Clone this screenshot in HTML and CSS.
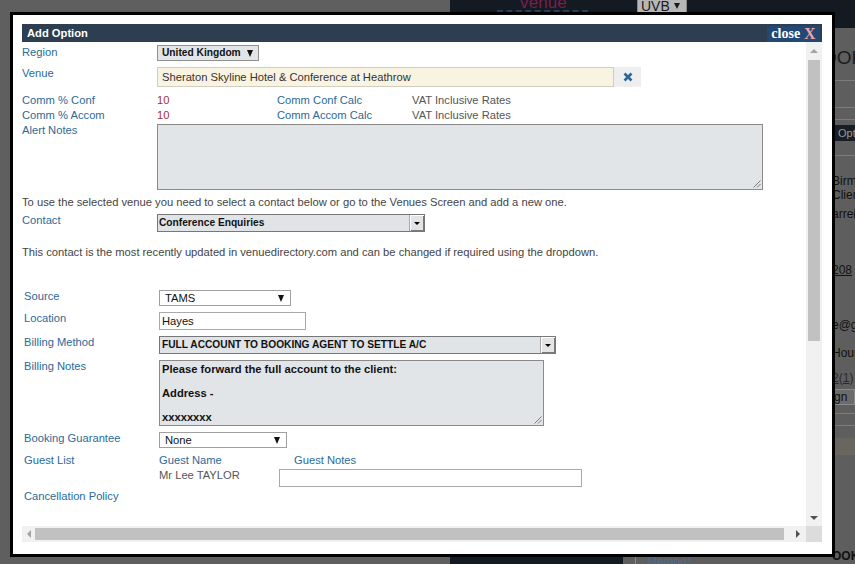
FILE: index.html
```html
<!DOCTYPE html>
<html>
<head>
<meta charset="utf-8">
<title>Add Option</title>
<link rel="stylesheet" href="styles.css">
</head>
<body>
<div class="page">
  <div class="bg-left"></div>
  <div class="bg-right">
    <div class="bg-head">
      <div class="bg-venue">Venue</div>
      <div class="bg-uvb">UVB <span class="bg-uvb-arr"></span></div>
    </div>
    <div class="bg-main">
      <div class="bg-fill">
        <div class="bg-spacer"></div>
        <div class="bg-foot">
          <div class="bg-foot-box"></div>
          <div class="bg-foot-sep"></div>
          <div class="bg-foot-text">Method*</div>
        </div>
      </div>
      <div class="bg-strip">
        <div class="s-big">OOKI</div>
        <div class="s-line s-l1"></div>
        <div class="s-line s-l2"></div>
        <div class="s-line s-l3"></div>
        <div class="s-band">Opti</div>
        <div class="s-line s-l4"></div>
        <div class="s-txt s-birmi">Birmi</div>
        <div class="s-txt">Client</div>
        <div class="s-txt s-arrei">arrei</div>
        <div class="s-txt s-208 s-u">208</div>
        <div class="s-txt s-eag">e@g</div>
        <div class="s-txt s-hour">Hour</div>
        <div class="s-txt s-21"><span class="s-u">2</span>(<span class="s-u">1</span>)</div>
        <div class="s-btn">gn</div>
        <div class="s-line s-l6"></div>
        <div class="s-line s-l7"></div>
        <div class="s-band2"></div>
        <div class="s-bottom">OOKI</div>
      </div>
    </div>
  </div>
</div>

<div class="modal">
  <div class="titlebar">
    <div class="title">Add Option</div>
    <div class="close"><span class="close-t">close</span><span class="close-x">X</span></div>
  </div>
  <div class="frame">
    <div class="content">
      <div class="row r-region">
        <div class="lbl">Region</div>
        <div class="sel sel-region"><span>United Kingdom</span><span class="tri"></span></div>
      </div>
      <div class="row r-venue">
        <div class="lbl">Venue</div>
        <div class="venue-input">Sheraton Skyline Hotel &amp; Conference at Heathrow</div>
        <div class="venue-x">
          <svg width="10" height="10" viewBox="0 0 10 10"><path d="M1.5 1.5 L8.5 8.5 M8.5 1.5 L1.5 8.5" stroke="#2a6797" stroke-width="2.6" stroke-linecap="butt"/></svg>
        </div>
      </div>
      <div class="row r-comm r-comm1">
        <div class="lbl">Comm % Conf</div>
        <div class="v10">10</div>
        <div class="calc">Comm Conf Calc</div>
        <div class="vat">VAT Inclusive Rates</div>
      </div>
      <div class="row r-comm">
        <div class="lbl">Comm % Accom</div>
        <div class="v10">10</div>
        <div class="calc">Comm Accom Calc</div>
        <div class="vat">VAT Inclusive Rates</div>
      </div>
      <div class="row r-alert">
        <div class="lbl">Alert Notes</div>
        <div class="ta ta-alert"><span class="grip"><svg width="8" height="8" viewBox="0 0 8 8"><path d="M7.5 0.5 L0.5 7.5 M7.5 4 L4 7.5" stroke="#7a7a7a" stroke-width="1"/></svg></span></div>
      </div>
      <p class="note note1">To use the selected venue you need to select a contact below or go to the Venues Screen and add a new one.</p>
      <div class="row r-contact">
        <div class="lbl">Contact</div>
        <div class="osel osel-contact"><span class="osel-t">Conference Enquiries</span><span class="obtn"><span class="otri"></span></span></div>
      </div>
      <p class="note note2">This contact is the most recently updated in venuedirectory.com and can be changed if required using the dropdown.</p>

      <div class="row2 r-source">
        <div class="lbl2">Source</div>
        <div class="wsel wsel-source"><span>TAMS</span><span class="tri"></span></div>
      </div>
      <div class="row2 r-next">
        <div class="lbl2">Location</div>
        <div class="inp inp-loc">Hayes</div>
      </div>
      <div class="row2 r-next">
        <div class="lbl2">Billing Method</div>
        <div class="osel osel-billing"><span class="osel-t">FULL ACCOUNT TO BOOKING AGENT TO SETTLE A/C</span><span class="obtn"><span class="otri"></span></span></div>
      </div>
      <div class="row2 r-next">
        <div class="lbl2">Billing Notes</div>
        <div class="ta ta-billing">
          <div class="ta-line">Please forward the full account to the client:</div>
          <div class="ta-line">&nbsp;</div>
          <div class="ta-line">Address -</div>
          <div class="ta-line">&nbsp;</div>
          <div class="ta-line">xxxxxxxx</div>
          <span class="grip"><svg width="8" height="8" viewBox="0 0 8 8"><path d="M7.5 0.5 L0.5 7.5 M7.5 4 L4 7.5" stroke="#7a7a7a" stroke-width="1"/></svg></span>
        </div>
      </div>
      <div class="row2 r-next">
        <div class="lbl2">Booking Guarantee</div>
        <div class="wsel wsel-none"><span>None</span><span class="tri"></span></div>
      </div>
      <div class="row2 r-next">
        <div class="lbl2">Guest List</div>
        <div class="ghead">Guest Name</div>
        <div class="ghead">Guest Notes</div>
      </div>
      <div class="row2 r-guest">
        <div class="lbl2"></div>
        <div class="gname">Mr Lee TAYLOR</div>
        <div class="inp inp-guest"></div>
      </div>
      <div class="row2 r-cancel">
        <div class="lbl2 lbl-wide">Cancellation Policy</div>
      </div>
    </div>
    <div class="vscroll">
      <div class="sb-btn"><span class="ar-up"></span></div>
      <div class="vthumb"></div>
      <div class="sb-fill"></div>
      <div class="sb-btn"><span class="ar-down"></span></div>
    </div>
  </div>
  <div class="hrow">
    <div class="hscroll">
      <div class="hb-left"><span class="ar-left"></span></div>
      <div class="hthumb"></div>
      <div class="sb-fill"></div>
      <div class="hb-right"><span class="ar-right"></span></div>
    </div>
    <div class="corner"></div>
  </div>
</div>
</body>
</html>
```

FILE: styles.css
```css
* { box-sizing: border-box; }
html, body { margin: 0; padding: 0; }
body {
  width: 855px;
  height: 564px;
  overflow: hidden;
  position: relative;
  background: #5f5f5f;
  font-family: "Liberation Sans", Arial, sans-serif;
}

/* ---------- background page (dimmed) ---------- */
.page { display: flex; height: 564px; }
.bg-left { width: 450px; background: #5f5f5f; }
.bg-right { flex: 1; display: flex; flex-direction: column; background: #5e5e5e; }
.bg-head {
  height: 28px;
  flex: none;
  background: #131a22;
  display: flex;
  align-items: flex-start;
  padding-left: 47px;
  overflow: hidden;
}
.bg-venue {
  width: 91px;
  height: 17px;
  margin-top: -5px;
  border-bottom: 2px dashed #2b3d5c;
  color: #7b1e4c;
  font-size: 17px;
  line-height: 15px;
  text-align: center;
}
.bg-uvb {
  margin-left: 49px;
  margin-top: -1px;
  width: 50px;
  height: 14px;
  background: #b7b7b7;
  border: 1px solid #8a8a8a;
  color: #1a1a1a;
  font-size: 14px;
  line-height: 12px;
  padding-left: 3px;
  display: flex;
  align-items: center;
  gap: 4px;
}
.bg-uvb-arr {
  width: 0; height: 0;
  border-left: 3px solid transparent;
  border-right: 3px solid transparent;
  border-top: 6px solid #1a1a1a;
}
.bg-main { flex: 1; display: flex; }
.bg-fill { width: 372px; display: flex; flex-direction: column; }
.bg-spacer { flex: 1; }
.bg-foot { height: 7px; display: flex; align-items: stretch; }
.bg-foot-box { width: 173px; background: #141a22; }
.bg-foot-sep { width: 1px; margin-left: 12px; background: #8a8a8a; }
.bg-foot-text {
  margin-left: 11px;
  color: #4b6c8d;
  font-size: 12px;
  line-height: 12px;
  margin-top: -1px;
}
.bg-strip {
  width: 33px;
  overflow: hidden;
  display: flex;
  flex-direction: column;
  color: #111;
  font-size: 12px;
}
.s-big {
  margin-top: 20px;
  font-size: 19px;
  line-height: 20px;
  color: #1c1c1c;
  white-space: nowrap;
}
.s-line { height: 1px; background: #7c7c7c; flex: none; }
.s-l1 { margin-top: 12px; }
.s-l2 { margin-top: 26px; }
.s-l3 { margin-top: 11px; }
.s-band {
  margin-top: 5px;
  height: 16px;
  background: #171e26;
  color: #999;
  font-size: 11px;
  line-height: 16px;
  padding-left: 16px;
  white-space: nowrap;
}
.s-l4 { margin-top: 14px; }
.s-txt { line-height: 14px; padding-left: 10px; white-space: nowrap; }
.s-birmi { margin-top: 18px; }
.s-arrei { margin-top: 5px; }
.s-208 { margin-top: 42px; }
.s-eag { margin-top: 41px; }
.s-hour { margin-top: 14px; }
.s-21 { margin-top: 11px; color: #2a2a2a; }
.s-u { text-decoration: underline; }
.s-btn {
  margin-top: 4px;
  height: 16px;
  margin-left: 9px;
  background: #6c6c6c;
  border: 1px solid #8a8a8a;
  line-height: 14px;
  padding-left: 2px;
  white-space: nowrap;
}
.s-l6 { margin-top: 8px; }
.s-l7 { margin-top: 11px; }
.s-band2 { margin-top: 12px; height: 17px; background: #69655f; }
.s-bottom {
  margin-top: auto;
  margin-bottom: 3px;
  font-weight: bold;
  font-size: 12px;
  line-height: 10px;
  padding-left: 10px;
  white-space: nowrap;
}

/* ---------- modal ---------- */
.modal {
  position: absolute;
  left: 10px;
  top: 12px;
  width: 825px;
  height: 545px;
  border: 3px solid #000;
  background: #fff;
  padding: 9px 10px 12px 9px;
  display: flex;
  flex-direction: column;
}
.titlebar {
  height: 18px;
  flex: none;
  background: #2c3e50;
  display: flex;
  justify-content: space-between;
  align-items: flex-start;
}
.title {
  color: #fff;
  font-weight: bold;
  font-size: 11.2px;
  line-height: 18px;
  padding-left: 5px;
}
.close {
  margin: 2px 2px 0 0;
  height: 16px;
  width: 53px;
  background: #224873;
  display: flex;
  align-items: center;
  justify-content: center;
  gap: 4px;
  font-family: "Liberation Serif", "Times New Roman", serif;
  font-weight: bold;
}
.close-t { color: #fff; font-size: 14px; line-height: 14px; }
.close-x { color: #f2a2a2; font-size: 16px; line-height: 14px; }

.frame { height: 484px; flex: none; display: flex; }
.content {
  flex: 1;
  overflow: hidden;
  padding-top: 3px;
  font-size: 11.2px;
  line-height: 14px;
  color: #333;
  white-space: nowrap;
}
.row { display: flex; align-items: flex-start; }
.lbl { width: 135px; flex: none; color: #2b6a99; }

/* selects */
.tri {
  width: 0; height: 0;
  border-left: 3.5px solid transparent;
  border-right: 3.5px solid transparent;
  border-top: 7px solid #111;
}
.sel {
  display: flex;
  align-items: center;
  gap: 6px;
  height: 16px;
  border: 1px solid #909090;
  background: #e2e5e8;
  color: #111;
  font-weight: bold;
  font-size: 10.2px;
  line-height: 14px;
  padding-left: 4px;
}
.sel-region { width: 102px; }

.r-venue { margin-top: 5px; }
.venue-input {
  margin-top: 1px;
  width: 457px;
  height: 20px;
  border: 1px solid #d1cdbf;
  background: #f9f3e1;
  padding-left: 4px;
  line-height: 18px;
  color: #333;
}
.venue-x {
  margin-top: 1px;
  width: 27px;
  height: 20px;
  background: #eeeeee;
  display: flex;
  align-items: center;
  justify-content: center;
}

.r-comm { line-height: 15px; }
.r-comm1 { margin-top: 6px; }
.v10 { width: 120px; color: #a33232; }
.calc { width: 135px; color: #2b6a99; }
.vat { color: #555; }

.ta {
  position: relative;
  border: 1px solid #8a8a8a;
  background: #e1e5e8;
}
.ta-alert { margin-top: 1px; width: 606px; height: 66px; }
.grip { position: absolute; right: 1px; bottom: 1px; width: 8px; height: 8px; display: flex; }

.note { margin: 0; color: #444; }
.note1 { margin-top: 5px; }
.note2 { margin-top: 13px; }

.r-contact { margin-top: 4px; }
.osel {
  margin-top: 1px;
  height: 18px;
  border: 1px solid #777;
  background: #e1e4e7;
  display: flex;
  justify-content: space-between;
  align-items: stretch;
  color: #111;
  font-weight: bold;
  font-size: 10.2px;
  line-height: 16px;
}
.osel-t { padding-left: 1px; }
.osel-contact { width: 268px; }
.obtn {
  width: 15px;
  background: #e4e4e4;
  border-left: 1px solid #a8a8a8;
  box-shadow: inset 1px 1px #ffffff, inset -1px -1px #7a7a7a;
  display: flex;
  align-items: center;
  justify-content: center;
}
.otri {
  width: 0; height: 0;
  border-left: 3px solid transparent;
  border-right: 3px solid transparent;
  border-top: 3px solid #000;
  margin-top: 1px;
}

/* second section */
.row2 { display: flex; align-items: flex-start; }
.lbl2 { width: 135px; margin-left: 2px; flex: none; color: #2b6a99; }
.r-source { margin-top: 30px; }
.r-next { margin-top: 5px; }
.r-guest { margin-top: 1px; }
.r-cancel { margin-top: 2px; }
.lbl-wide { width: 200px; }

.wsel {
  margin-top: 1px;
  height: 16px;
  border: 1px solid #a0a0a0;
  background: #fff;
  color: #111;
  display: flex;
  align-items: center;
  justify-content: space-between;
  padding: 0 6px 0 5px;
  line-height: 14px;
}
.wsel-source { width: 132px; }
.wsel-none { width: 128px; }

.inp {
  margin-top: 1px;
  height: 18px;
  border: 1px solid #a9a9a9;
  background: #fff;
  color: #111;
  line-height: 16px;
  padding-left: 2px;
}
.inp-loc { width: 147px; }
.inp-guest { width: 303px; }

.osel-billing { width: 397px; }
.osel-billing .osel-t { padding-left: 2px; }

.ta-billing {
  margin-top: 1px;
  width: 385px;
  height: 66px;
  padding: 2px 2px;
  color: #111;
  font-weight: bold;
  line-height: 12px;
}
.ghead { width: 135px; color: #2b6a99; }
.gname { width: 120px; color: #555; }

/* scrollbars */
.vscroll {
  width: 16px;
  flex: none;
  background: #f1f1f1;
  display: flex;
  flex-direction: column;
  align-items: center;
}
.sb-btn { height: 17px; width: 16px; flex: none; display: flex; align-items: center; justify-content: center; }
.sb-fill { flex: 1; }
.vthumb { width: 12px; height: 281px; margin-top: 1px; background: #c1c1c1; flex: none; }
.ar-up { width: 0; height: 0; border-left: 4px solid transparent; border-right: 4px solid transparent; border-bottom: 4px solid #a3a3a3; }
.ar-down { width: 0; height: 0; border-left: 4px solid transparent; border-right: 4px solid transparent; border-top: 4px solid #505050; }
.hrow { height: 16px; flex: none; display: flex; }
.hscroll { flex: 1; background: #f1f1f1; display: flex; align-items: center; }
.hb-left { width: 13px; height: 16px; flex: none; display: flex; align-items: center; justify-content: center; }
.hb-right { width: 17px; height: 16px; flex: none; display: flex; align-items: center; justify-content: center; }
.hthumb { width: 749px; height: 12px; background: #c1c1c1; flex: none; }
.ar-left { width: 0; height: 0; border-top: 4px solid transparent; border-bottom: 4px solid transparent; border-right: 4px solid #a3a3a3; }
.ar-right { width: 0; height: 0; border-top: 4px solid transparent; border-bottom: 4px solid transparent; border-left: 4px solid #505050; }
.corner { width: 16px; background: #dcdcdc; }
```
